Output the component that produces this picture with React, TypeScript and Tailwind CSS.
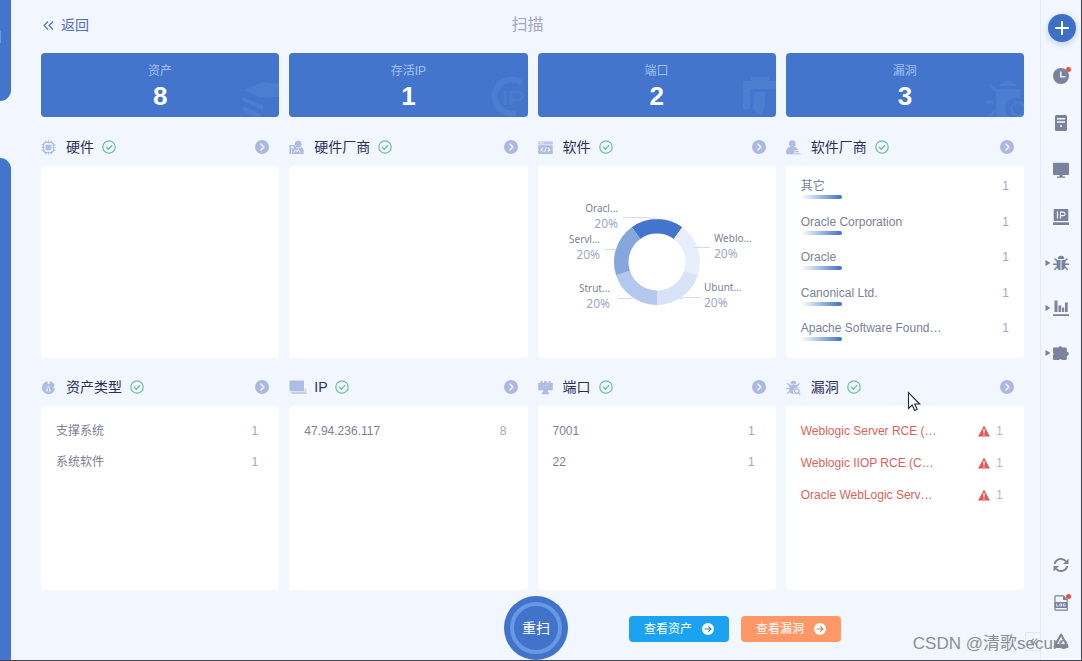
import React from "react";

type SvgProps = { className?: string; children: React.ReactNode; box?: string };

function Svg({ className = "size-[15px]", children, box = "0 0 16 16" }: SvgProps) {
  return (
    <svg className={`shrink-0 ${className}`} viewBox={box} fill="currentColor" aria-hidden="true">
      {children}
    </svg>
  );
}

const stroke = { fill: "none", stroke: "currentColor" } as const;

const ChipIcon = () => (
  <Svg>
    <path d="M5 0.5v3M8 0.5v3M11 0.5v3M5 12.5v3M8 12.5v3M11 12.5v3M0.5 5h3M0.5 8h3M0.5 11h3M12.5 5h3M12.5 8h3M12.5 11h3" {...stroke} strokeWidth="1.1" />
    <rect x="2.6" y="2.6" width="10.8" height="10.8" rx="3" {...stroke} strokeWidth="1.4" />
    <rect x="5" y="5" width="6" height="6" rx="0.6" />
  </Svg>
);

const HardwareVendorIcon = () => (
  <Svg>
    <circle cx="9.8" cy="4.4" r="3.6" />
    <path d="M6.4 7.5 9.8 9l3.4-1.5c1.6.8 2.5 2.6 2.5 5V15H3V9z" />
    <path d="M0.4 5.4h4.2c1.8 0 2.6 1 2.6 2.4S6.2 10 4.8 10H2.4v5h-2z" />
    <path d="M2.4 7.2h2v1.4h-2zM5 13.5l2-3 1.5 2L10 10l2 3.5" fill="none" stroke="#f1f6ff" strokeWidth="1" />
  </Svg>
);

const CodeIcon = () => (
  <Svg>
    <path d="M0.3 1.5h15.4v3.3H0.3z" opacity=".8" />
    <path d="M0.3 5.6h15.4V15H0.3z" />
    <path d="M1.5 3H4M5 3h1" stroke="#fff" strokeWidth="1" />
    <path d="M5.2 8.5l-2 1.8 2 1.8M8.8 8l-1.6 4.6M10.8 8.5l2 1.8-2 1.8" fill="none" stroke="#fff" strokeWidth="1.1" />
  </Svg>
);

const PersonIcon = () => (
  <Svg>
    <circle cx="6.8" cy="3.9" r="3.6" />
    <path d="M0.3 15.3v-3c0-2.800 1.500-4.500 3.600-4.900h5.800c1.800.4 3 1.800 3.300 3.600H9v4.300z" />
    <path d="M9.500 11.800h4v1.200h-4zM9.500 14h6v1.300h-6z" />
  </Svg>
);

const TypeIcon = () => (
  <Svg>
    <path d="M7 1.200A7 7 0 1 0 14.800 9.500L13 7.500 14.800 6A7 7 0 0 0 9.300 1.200V4H7z" />
    <path d="M5 12 8 5.500 11 12z" fill="#dfe7f8" />
    <path d="M8 8v4" stroke="currentColor" strokeWidth="1" />
  </Svg>
);

const LaptopIcon = () => (
  <Svg className="h-[15px] w-[18px]" box="0 0 18 15">
    <rect x="0.5" y="0.5" width="14.5" height="10.5" rx=".8" />
    <path d="M0.5 11.500h15l2.300 1.200v1.300H3.500z" opacity=".7" />
    <path d="M15.500 8.500h1.800V12h-1.800z" opacity=".5" />
  </Svg>
);

const PortIcon = () => (
  <Svg>
    <path d="M2.500 1h2.200v2h2V1h2.600v2h2V1h2.200v2H15c.5 0 .8.3.8.8V10c0 .6-.4 1-1 1h-4.300v2H12v2.300H4V13h1.500v-2H1.200c-.6 0-1-.4-1-1V3.800c0-.5.3-.8.8-.8h1.500z" />
    <path d="M5.600 5v1.500M8 5v1.500M10.400 5v1.500" stroke="#f1f6ff" strokeWidth=".8" opacity=".5" />
  </Svg>
);

const BugShape = () => (
  <>
    <path d="M4.800 3.900a3.200 3.200 0 0 1 6.400 0z" />
    <path d="M7.500 5v10.300C5.300 15 3.700 13.300 3.700 11V5zM8.500 5v10.300c2.200-.3 3.800-2 3.800-4.300V5z" />
    <path d="M4.300 6.300 2 4M.4 9.200h3.800M4.300 11.700l-2.500 2.500M11.700 6.300 14 4M15.600 9.200h-3.800M11.700 11.700l2.500 2.500" {...stroke} strokeWidth="1.500" strokeLinecap="round" />
  </>
);

const BugScanIcon = () => (
  <Svg>
    <path d="M4.800 3.900a3.200 3.200 0 0 1 6.400 0z" />
    <path d="M3.700 5h8.600v4a3.500 3.500 0 0 0-4 5.500v.8C5.500 15 3.700 13.300 3.700 11z" />
    <path d="M4.300 6.300 2 4M.4 9.200h3.800M4.300 11.700l-2.500 2.500M11.700 6.300 14 4M8 5v5" {...stroke} strokeWidth="1.400" strokeLinecap="round" />
    <circle cx="11.500" cy="11.800" r="2.300" {...stroke} strokeWidth="1.500" />
    <path d="m13.300 13.600 1.800 1.800" {...stroke} strokeWidth="1.400" />
  </Svg>
);

function GoArrow({ label }: { label: string }) {
  return (
    <button type="button" aria-label={label} className="ml-auto text-[#abb9e0]">
      <Svg className="size-[14px]">
        <circle cx="8" cy="8" r="8" />
        <path d="m6.300 4.200 3.800 3.800-3.800 3.800" fill="none" stroke="#eaf0fd" strokeWidth="1.800" />
      </Svg>
    </button>
  );
}

type PanelProps = {
  title: string;
  icon: React.ReactNode;
  cardClass: string;
  children?: React.ReactNode;
};

function Panel({ title, icon, cardClass, children }: PanelProps) {
  return (
    <section className="min-w-0">
      <header className="flex h-[38px] items-center pr-[10px]">
        <span className="flex w-[25px] text-[#b0bde2]">{icon}</span>
        <h2 className="text-sm text-[#2a2f57]">{title}</h2>
        <Svg className="ml-2 size-[14px] text-[#6fbda3]">
          <circle cx="8" cy="8" r="7.100" {...stroke} strokeWidth="1.400" />
          <path d="m4.600 8 2.600 2.600 4.400-4.600" {...stroke} strokeWidth="1.500" />
        </Svg>
        <GoArrow label={title} />
      </header>
      <div className={`rounded-[4px] bg-white ${cardClass}`}>{children}</div>
    </section>
  );
}

function StatCard({ label, value, children }: { label: string; value: number; children: React.ReactNode }) {
  return (
    <div className="relative h-16 overflow-hidden rounded-[4px] bg-[#4275cb] pt-[9px] text-center">
      <p className="text-xs leading-[18px] text-[#a3c0f0]">{label}</p>
      <p className="text-[26px] leading-8 font-bold text-white">{value}</p>
      <div className="absolute right-0 bottom-0 text-[#5d8cda]/35">{children}</div>
    </div>
  );
}

const vendors = ["其它", "Oracle Corporation", "Oracle", "Canonical Ltd.", "Apache Software Found…"];
const threats = ["Weblogic Server RCE (…", "Weblogic IIOP RCE (C…", "Oracle WebLogic Serv…"];

function CountList({ rows }: { rows: [string, number][] }) {
  return (
    <ul className="pt-[9px] pr-[21px] pl-[15px] text-xs text-[#7c7f95]">
      {rows.map(([name, count]) => (
        <li key={name} className="flex h-[31px] items-center justify-between">
          <span>{name}</span>
          <span className="text-[#a3a9c4]">{count}</span>
        </li>
      ))}
    </ul>
  );
}

const slices = [
  { from: -36, color: "#4275cb" },
  { from: 36, color: "#e8eefa" },
  { from: 108, color: "#d8e3f7" },
  { from: 180, color: "#b4c8ed" },
  { from: 252, color: "#86a7de" },
];

const cx = 119;
const cy = 96;

function slicePath(from: number) {
  const point = (deg: number, r: number) => {
    const a = (deg * Math.PI) / 180;
    return `${(cx + r * Math.sin(a)).toFixed(2)} ${(cy - r * Math.cos(a)).toFixed(2)}`;
  };
  return `M${point(from, 43)}A43 43 0 0 1 ${point(from + 72, 43)}L${point(from + 72, 28.5)}A28.5 28.5 0 0 0 ${point(from, 28.5)}Z`;
}

const chartLabels = [
  { name: "Oracl...", x: 80, y: 46, end: true },
  { name: "Servl...", x: 62, y: 77, end: true },
  { name: "Strut...", x: 72, y: 126, end: true },
  { name: "Weblo...", x: 176, y: 76, end: false },
  { name: "Ubunt...", x: 166, y: 125, end: false },
];

function SoftwareChart() {
  return (
    <svg viewBox="0 0 238 192" className="mx-auto h-48 w-[238px] font-['Noto_Sans',sans-serif]" role="img" aria-label="软件">
      {slices.map((s) => (
        <path key={s.from} d={slicePath(s.from)} fill={s.color} />
      ))}
      <path d="M85 51.5h22l12 1.500M67 83.500h11M80 132.500h12l5-1M172 81.500h-16M162 131.500h-14l-6 1" fill="none" stroke="#d0dcf2" />
      {chartLabels.map((l) => (
        <g key={l.name} textAnchor={l.end ? "end" : "start"}>
          <text x={l.x} y={l.y} fontSize="10" fill="#7c7f95">{l.name}</text>
          <text x={l.x} y={l.y + 16} fontSize="12" fill="#a0a8c8">20%</text>
        </g>
      ))}
    </svg>
  );
}

function RailButton({ label, arrow, dot, tall, children }: { label: string; arrow?: boolean; dot?: boolean; tall: string; children: React.ReactNode }) {
  return (
    <button type="button" aria-label={label} className={`relative flex w-full shrink-0 items-center justify-center text-[#7a829d] ${tall}`}>
      {arrow && (
        <Svg className="absolute left-1 size-[6px]" box="0 0 6 6">
          <path d="M.5 0l5 3-5 3z" />
        </Svg>
      )}
      <span className="relative flex">
        {children}
        {dot && <span className="absolute -top-px -right-[2px] size-[5px] rounded-full bg-[#f0503f]" />}
      </span>
    </button>
  );
}

function Rail() {
  return (
    <aside className="flex w-[41px] shrink-0 flex-col items-center border-l border-[#e4ebf8] bg-[#f3f7ff] pt-[14px]">
      <button type="button" aria-label="新增" className="mb-[10px] ml-[2px] flex size-7 shrink-0 items-center justify-center rounded-full bg-[#3f70c8] text-white shadow-[0_2px_6px_rgba(66,117,203,0.35)]">
        <Svg className="size-4">
          <path d="M8 1v14M1 8h14" stroke="currentColor" strokeWidth="2" />
        </Svg>
      </button>
      <RailButton label="历史" dot tall="h-[47px]">
        <Svg className="size-4">
          <circle cx="8" cy="8" r="8" />
          <path d="M7.800 3.500v5.300h4.700" fill="none" stroke="#f3f7ff" strokeWidth="1.500" />
        </Svg>
      </RailButton>
      <RailButton label="主机" tall="h-[47px]">
        <Svg className="size-4">
          <rect x="2" width="12" height="16" rx="1.500" />
          <path d="M4 3.700h8M4 7h8" stroke="#f3f7ff" strokeWidth="1.500" />
          <circle cx="8" cy="11" r="1.100" fill="#f3f7ff" />
        </Svg>
      </RailButton>
      <RailButton label="显示器" tall="h-[47px]">
        <Svg className="size-4">
          <path d="M1 .8h14a1 1 0 0 1 1 1V12a1 1 0 0 1-1 1H9.500v1.500H12v1.200H4v-1.200h2.500V13H1a1 1 0 0 1-1-1V1.800a1 1 0 0 1 1-1z" />
        </Svg>
      </RailButton>
      <RailButton label="IP" tall="h-[47px]">
        <Svg className="size-4">
          <path d="M1.500 0h13a.8.8 0 0 1 .8.8V12H.7V.8A.8.8 0 0 1 1.500 0zM0 13.300h16V16H0z" />
          <path d="M4.500 2.500v7M7.500 9.500V3.100h2.700a1.700 1.700 0 0 1 0 3.600H7.500" fill="none" stroke="#f3f7ff" strokeWidth="1.200" />
        </Svg>
      </RailButton>
      <RailButton label="漏洞" arrow tall="h-[45px]">
        <Svg className="size-4"><BugShape /></Svg>
      </RailButton>
      <RailButton label="报表" arrow tall="h-[45px]">
        <Svg className="size-4">
          <path d="M1.500.5h3V12h-3zM5.500 5.500h2.700V12H5.500zM9 7.500h2.200V12H9zM12 2.500h2.700V12H12zM0 14.300h16V16H0z" />
        </Svg>
      </RailButton>
      <RailButton label="插件" arrow tall="h-[45px]">
        <Svg className="size-4">
          <path d="M1 2.500h4.300a2.200 2.200 0 0 1 4 0h3.500a1 1 0 0 1 1 1v3.200a2.100 2.100 0 1 1 0 4.200V14a1 1 0 0 1-1 1H9.300a2.200 2.200 0 0 0-3.500 0H1a1 1 0 0 1-1-1v-3.500a2.100 2.100 0 0 0 0-3V3.500a1 1 0 0 1 1-1z" />
        </Svg>
      </RailButton>
      <div className="mt-auto w-full">
        <RailButton label="刷新" tall="h-[38px]">
          <Svg className="size-4">
            <path d="M1.800 7A6.300 6.300 0 0 1 12.800 4.200M14.200 9A6.300 6.300 0 0 1 3.200 11.800" {...stroke} strokeWidth="2" />
            <path d="M15.500 1.500V7H10zM.5 14.500V9H6z" />
          </Svg>
        </RailButton>
        <RailButton label="日志" dot tall="h-[38px]">
          <Svg className="size-4">
            <path d="M2.700.8h7.500l4 4v10.400H2.700a.7.7 0 0 1-.7-.7v-13a.7.7 0 0 1 .7-.7z" {...stroke} strokeWidth="1.200" />
            <path d="M10 .5V5h4.500zM1.500 7h13v6h-13z" />
            <path d="M3.700 8.500v2.700h1.800M6.800 8.800h1.800V11H6.800zM12.300 8.800h-2V11h2v-1" fill="none" stroke="#f3f7ff" strokeWidth=".8" />
          </Svg>
        </RailButton>
        <RailButton label="告警" tall="h-[38px]">
          <Svg className="size-4">
            <path d="M8 1.500 14.500 13.500h-13z" {...stroke} strokeWidth="2" strokeLinejoin="round" />
            <path d="M1 11h14v4H1z" />
            <circle cx="8" cy="9" r="1.500" />
          </Svg>
        </RailButton>
      </div>
    </aside>
  );
}

function LinkButton({ color, iconColor, children }: { color: string; iconColor: string; children: string }) {
  return (
    <button type="button" className={`flex h-[26px] w-[100px] shrink-0 items-center justify-center gap-[10px] rounded-[4px] text-xs text-white ${color}`}>
      {children}
      <Svg className={`size-3 ${iconColor}`}>
        <circle cx="8" cy="8" r="8" fill="#fff" />
        <path d="M3.500 8H12M8.500 4.500 12 8l-3.500 3.500" {...stroke} strokeWidth="1.500" />
      </Svg>
    </button>
  );
}

export default function App() {
  return (
    <div className="relative flex min-h-screen overflow-hidden border-r border-b border-[#45424f] bg-[#f1f6ff] font-['Liberation_Sans','Noto_Sans_CJK_SC',sans-serif]">
      <div className="flex w-[11px] shrink-0 flex-col gap-[57px]">
        <div className="h-[101px] rounded-br-[12px] bg-[#4275cb] pt-[31px]">
          <div className="h-3 w-px bg-[#7099dc]" />
        </div>
        <div className="grow rounded-tr-[12px] bg-[#4275cb]" />
      </div>

      <main className="flex min-w-0 grow flex-col pr-4 pl-[30px]">
        <header className="grid h-[53px] grid-cols-[1fr_auto_1fr] items-center pr-[10px] pb-[3px]">
          <a href="#" className="flex items-center gap-[7px] pl-[2px] text-sm text-[#566db3]">
            <Svg className="size-[11px]" box="0 0 11 11">
              <path d="M5 1.500 1 5.500l4 4M10 1.500l-4 4 4 4" {...stroke} strokeWidth="1.100" />
            </Svg>
            返回
          </a>
          <h1 className="text-base text-[#a0a7bd]">扫描</h1>
        </header>

        <div className="grid grid-cols-4 gap-[10px]">
          <StatCard label="资产" value={8}>
            <Svg className="h-9 w-[38px]" box="0 0 38 36">
              <path d="M2 9 22 1l16 2v13l-18 1zM2 16l20 8v5L2 20zM2 25l18 8v3h-6L2 30z" />
            </Svg>
          </StatCard>
          <StatCard label="存活IP" value={1}>
            <Svg className="h-[41px] w-[38px]" box="0 0 38 41">
              <path d="M32 7A17 17 0 1 0 26 37" {...stroke} strokeWidth="6" />
              <path d="M15 15v14M21 29V16h7a4 4 0 0 1 0 8h-7" {...stroke} strokeWidth="3" />
            </Svg>
          </StatCard>
          <StatCard label="端口" value={2}>
            <Svg className="h-[41px] w-[34px]" box="0 0 34 41">
              <path d="M1 5h8V1h18v4h7v8H8v20H1z" />
              <path d="M13 16h10v16l-3 6h-5l-4-6z" />
            </Svg>
          </StatCard>
          <StatCard label="漏洞" value={3}>
            <Svg className="h-[41px] w-[38px]" box="0 0 38 41">
              <path d="M13 10a10 9 0 0 1 18 0zM10 13h24v10a9 9 0 0 0-9 18H10z" />
              <path d="m10 15-6-6M0 26h7M10 34l-6 6" {...stroke} strokeWidth="3" />
              <circle cx="32" cy="33" r="6.500" {...stroke} strokeWidth="3" />
            </Svg>
          </StatCard>
        </div>

        <div className="mt-[11px] grid grid-cols-4 gap-[10px]">
          <Panel title="硬件" icon={<ChipIcon />} cardClass="h-48" />
          <Panel title="硬件厂商" icon={<HardwareVendorIcon />} cardClass="h-48" />
          <Panel title="软件" icon={<CodeIcon />} cardClass="h-48">
            <SoftwareChart />
          </Panel>
          <Panel title="软件厂商" icon={<PersonIcon />} cardClass="h-48">
            <ul className="flex h-full flex-col justify-between px-[15px] pt-[11px] pb-[17px] text-xs text-[#7c7f95]">
              {vendors.map((name) => (
                <li key={name}>
                  <div className="flex justify-between leading-[18px]">
                    <span>{name}</span>
                    <span className="text-[#a3a9c4]">1</span>
                  </div>
                  <div className="h-1 w-[41px] rounded-full bg-linear-to-r from-white to-[#3f70c6]" />
                </li>
              ))}
            </ul>
          </Panel>
        </div>

        <div className="mt-[10px] grid grid-cols-4 gap-[10px]">
          <Panel title="资产类型" icon={<TypeIcon />} cardClass="h-[184px]">
            <CountList rows={[["支撑系统", 1], ["系统软件", 1]]} />
          </Panel>
          <Panel title="IP" icon={<LaptopIcon />} cardClass="h-[184px]">
            <CountList rows={[["47.94.236.117", 8]]} />
          </Panel>
          <Panel title="端口" icon={<PortIcon />} cardClass="h-[184px]">
            <CountList rows={[["7001", 1], ["22", 1]]} />
          </Panel>
          <Panel title="漏洞" icon={<BugScanIcon />} cardClass="h-[184px]">
            <ul className="pt-[9px] pr-[21px] pl-[15px] text-xs text-[#dd5f59]">
              {threats.map((name) => (
                <li key={name} className="flex h-8 items-center">
                  <span className="grow">{name}</span>
                  <Svg className="mr-[6px] size-3" box="0 0 12 12">
                    <path d="M6 .5l6 11H0z" />
                    <path d="M6 4v4M6 9v1.300" stroke="#fff" strokeWidth="1.200" />
                  </Svg>
                  <span className="text-[#dba9b0]">1</span>
                </li>
              ))}
            </ul>
          </Panel>
        </div>

        <footer className="mt-[6px] grid grid-cols-[1fr_64px_1fr] items-center pl-[7px]">
          <button type="button" className="col-start-2 flex size-16 items-center justify-center rounded-full bg-[#4173cb] p-[6px] text-sm text-white">
            <span className="flex size-full items-center justify-center rounded-full border-4 border-[#6699e2]">重扫</span>
          </button>
          <div className="flex gap-3 pt-px pl-[61px]">
            <LinkButton color="bg-[#1ba3f2]" iconColor="text-[#2f7fb8]">查看资产</LinkButton>
            <LinkButton color="bg-[#ff9767]" iconColor="text-[#c98563]">查看漏洞</LinkButton>
          </div>
        </footer>
      </main>

      <Rail />

      <button type="button" aria-label="收起" className="absolute right-10 bottom-[9px] flex h-[19px] w-4 items-center justify-center border border-r-0 border-[#e1e8f6] text-[#8d93a8]">
        <Svg className="size-2" box="0 0 11 11">
          <path d="M5 1 1 5.500 5 10M10 1 6 5.500l4 4.500" {...stroke} strokeWidth="1.500" />
        </Svg>
      </button>

      <p className="pointer-events-none absolute right-[13px] bottom-1 text-[17px] leading-6 text-[#8b8e96]">CSDN @清歌secure</p>

      <svg className="pointer-events-none absolute top-[391px] left-[907px] h-[21px] w-[14px]" viewBox="0 0 14 21" aria-hidden="true">
        <path d="M1.500 1.500v16l3.700-3.500 2.500 5.500 2.500-1.200-2.500-5.300h5z" fill="#fff" stroke="#23263a" strokeWidth="1.100" />
      </svg>
    </div>
  );
}
